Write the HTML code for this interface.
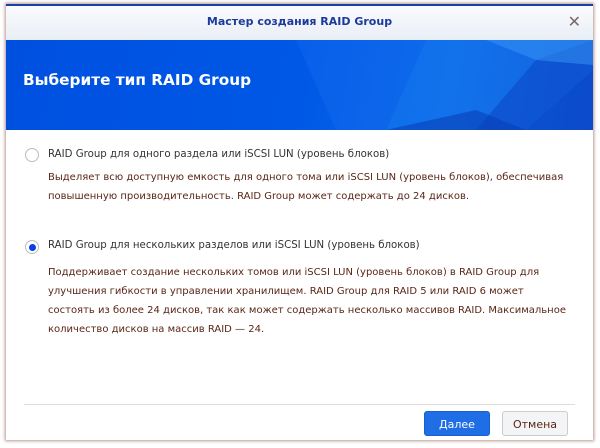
<!DOCTYPE html>
<html><head><meta charset="utf-8"><style>
body{margin:0;width:600px;height:448px;background:#fff;position:relative;overflow:hidden;font-family:"DejaVu Sans","Liberation Sans",sans-serif}
.win{position:absolute;left:6px;top:4px;width:587px;height:436px;background:#fff;box-shadow:0 0 3px 1px rgba(120,60,50,.55);border-top:2px solid #1c3fa8;box-sizing:border-box}
.tb{position:absolute;left:0;top:0;right:0;height:34px;background:linear-gradient(#fafbfd,#e9eef6);text-align:center;line-height:32px;font-size:11px;font-weight:bold;color:#1c3a9a}
.x{position:absolute;right:12px;top:0;color:#7a6a6a;font-weight:normal;font-size:16px}
.ban{position:absolute;left:0;top:34px;right:0;height:90px;background:linear-gradient(100deg,#0050e0 0%,#0058e6 50%,#0a6ae8 75%,#0a4fd0 100%);overflow:hidden}
.ban h1{position:absolute;left:17px;top:31px;margin:0;font-size:15.3px;color:#fff;font-weight:bold}
.r{position:absolute;width:12px;height:12px;border:1px solid #b8bcc4;border-radius:50%;background:#fff}
.r.on::after{content:"";position:absolute;left:2.5px;top:2.5px;width:7px;height:7px;border-radius:50%;background:#0a3fe0}
.t{position:absolute;left:42px;font-size:10.2px;color:#333;white-space:nowrap}
.d{position:absolute;left:42px;font-size:10px;color:#5a2616;line-height:19px;white-space:nowrap}
.sep{position:absolute;left:18px;right:18px;top:398px;border-top:1px solid #ddd}
.b{position:absolute;top:405px;width:66px;height:25px;border-radius:3px;font-size:11px;text-align:center;line-height:25px;box-sizing:border-box}
</style></head><body>
<div class="win">
<div class="tb">Мастер создания RAID Group<span class="x">✕</span></div>
<div class="ban">
<svg width="587" height="90" style="position:absolute;left:0;top:0">
<polygon points="290,0 420,0 380,90 330,90" fill="#1a6ef0" opacity=".35"/>
<polygon points="420,0 587,0 587,30 520,90 380,90" fill="#1d7cf0" opacity=".45"/>
<polygon points="530,20 587,0 587,90 470,90" fill="#0b48c8" opacity=".6"/>
<polygon points="480,0 587,0 587,25 530,20" fill="#3a95f5" opacity=".5"/>
<polygon points="380,90 470,70 520,90" fill="#0840b8" opacity=".6"/>
</svg>
<h1>Выберите тип RAID Group</h1></div>
<div class="r" style="left:19px;top:142px"></div>
<div class="t" style="top:143px">RAID Group для одного раздела или iSCSI LUN (уровень блоков)</div>
<div class="d" style="top:162px">Выделяет всю доступную емкость для одного тома или iSCSI LUN (уровень блоков), обеспечивая<br>повышенную производительность. RAID Group может содержать до 24 дисков.</div>
<div class="r on" style="left:19px;top:234px"></div>
<div class="t" style="top:234px">RAID Group для нескольких разделов или iSCSI LUN (уровень блоков)</div>
<div class="d" style="top:257px">Поддерживает создание нескольких томов или iSCSI LUN (уровень блоков) в RAID Group для<br>улучшения гибкости в управлении хранилищем. RAID Group для RAID 5 или RAID 6 может<br>состоять из более 24 дисков, так как может содержать несколько массивов RAID. Максимальное<br>количество дисков на массив RAID — 24.</div>
<div class="sep"></div>
<div class="b" style="left:418px;background:#1f6ee6;color:#fff;border:1px solid #1a5fd0">Далее</div>
<div class="b" style="left:496px;background:#f3f4f6;color:#5a2616;border:1px solid #ccc">Отмена</div>
</div>
</body></html>
